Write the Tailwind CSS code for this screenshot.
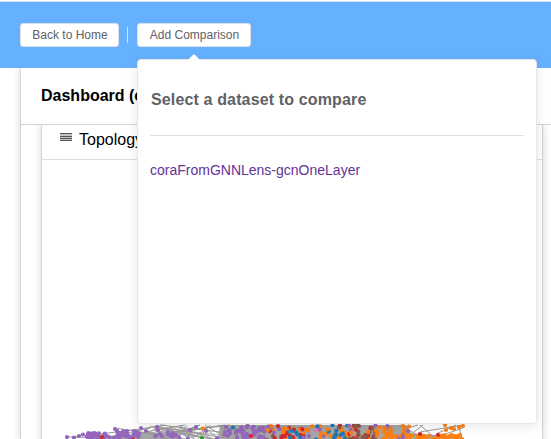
<!DOCTYPE html>
<html lang="en">
<head>
<meta charset="utf-8">
<title>Dashboard</title>
<script src="https://cdn.jsdelivr.net/npm/@tailwindcss/browser@4"></script>
</head>
<body class="relative h-[439px] w-[551px] overflow-hidden bg-white font-['Liberation_Sans',Arial,sans-serif] text-black">
<header class="mt-px flex h-[67px] items-start border-t border-[#dcdfe6] bg-[#66b1ff] pl-5 pt-[21px]">
  <button class="h-6 w-[99px] whitespace-nowrap rounded-[3px] border border-[#dcdfe6] bg-white pl-px text-[12px] leading-[22px] text-[#606266]">Back to Home</button>
  <div class="mx-[8px] mt-1 h-4 w-px bg-[#dcdfe6]"></div>
  <button class="ml-px h-6 w-[114px] whitespace-nowrap rounded-[3px] border border-[#dcdfe6] bg-white pl-px text-[12px] leading-[22px] text-[#606266]">Add Comparison</button>
</header>
<main class="ml-5 flex h-[371px] flex-col border-l border-[#d3d3d3] bg-white shadow-[0_0_8px_rgba(0,0,0,0.16)] [clip-path:inset(0_0_0_-20px)]">
  <h1 class="h-[57px] shrink-0 whitespace-nowrap border-b border-[#d3d3d3] pl-5 text-[16px] font-bold leading-[55px]">Dashboard (c</h1>
  <div class="flex-1 overflow-hidden pl-5">
    <section class="h-[400px] w-[502px] border-x border-[#d3d3d3] bg-white shadow-[0_0_8px_rgba(0,0,0,0.16)]">
      <div class="flex h-[35px] items-start border-b border-[#dcdcdc] pl-[18px]">
        <svg class="mt-2" width="12" height="9" viewBox="0 0 12 9" shape-rendering="crispEdges"><path fill="#c4c4c4" d="M0 0h12v8H0z"/><path fill="#555" d="M0 0h12v1H0zM0 3h12v1H0zM0 5h12v1H0zM0 7h12v1H0z"/></svg>
        <h2 class="ml-[7px] mt-[3px] text-[16px] leading-[24px]">Topology</h2>
      </div>
      <svg class="mt-[263px] block" width="500" height="18" viewBox="42 422 500 18">
        <g id="links" stroke="#999" fill="none"></g>
        <g id="nodes"></g>
      </svg>
    </section>
  </div>
</main>
<aside class="absolute left-[137px] top-[59px] h-[365px] w-[400px] rounded-[4px] border border-[#e4e7ed] bg-white px-3 text-[#606266] shadow-[0_2px_12px_rgba(0,0,0,0.1)]">
  <svg class="absolute left-[50px] top-[-6px]" width="12" height="7" viewBox="0 0 12 7"><path fill="#fff" d="M0 6 5 .8Q6 0 7 .8L12 6V7H0Z"/></svg>
  <h3 class="h-[76px] whitespace-nowrap border-b border-[#dcdfe6] pl-px text-[16px] font-bold leading-[79px] tracking-[0.14px]">Select a dataset to compare</h3>
  <a class="mt-6 block whitespace-nowrap text-[14px] leading-5 text-[#643296]">coraFromGNNLens-gcnOneLayer</a>
</aside>
<script>
const P = '#9467bd', O = '#ff7f0e', B = '#1f77b4', R = '#d62728', N = '#8c564b', G = '#2ca02c', K = '#e377c2';
let seed = 17;
const rnd = () => (seed = (seed * 16807) % 2147483647) / 2147483647;
const links = document.getElementById('links'), nodes = document.getElementById('nodes');
const add = (g, tag, a) => {
  const e = document.createElementNS('http://www.w3.org/2000/svg', tag);
  for (const k in a) e.setAttribute(k, a[k]);
  g.appendChild(e);
};
const line = (x1, y1, x2, y2, w = 1) => add(links, 'line', {x1, y1, x2, y2, 'stroke-width': w});
const dot = (x, y, c) => add(nodes, 'circle', {cx: x, cy: y, r: 2.1, fill: c});

add(links, 'path', {d: 'M110 440V435L130 433 148 430 170 434 185 438 190 440H218L220 424H406L412 433 460 435 464 440Z', fill: '#a5a5a5', stroke: 'none'});
[[67,436,110,437],[75,436,84,433],[84,435,140,428],[115,427,160,434],[110,436,150,427],[140,428,165,424],[145,431,185,424],[150,434,225,424],[160,438,200,424],[155,430,215,438],[165,427,225,437],[160,424,220,431],[180,424,188,440],[187,424,175,440],[196,424,185,440],[210,424,196,440],[205,424,223,435],[190,429,230,424],[400,424,425,438],[405,438,423,424],[420,424,435,437],[405,428,418,424],[420,431,463,424],[436,433,456,424],[440,435,463,427],[459,426,462,438],[408,433,460,436]].forEach(a => line(...a));
for (let i = 0; i < 22; i++) line(150 + rnd() * 75, 424 + rnd() * 5, 160 + rnd() * 65, 434 + rnd() * 6, .8);

const cluster = (n, x0, x1, y0, y1, colors) => {
  for (let i = 0; i < n; i++) dot(x0 + rnd() * (x1 - x0), y0 + rnd() * (y1 - y0), colors[Math.floor(rnd() * colors.length)]);
};
cluster(38, 87, 105, 432, 437.5, [P]);
cluster(12, 103, 122, 434, 438, [P]);
cluster(20, 117, 145, 430, 437, [P]);
cluster(9, 142, 174, 431, 436, [P]);
cluster(10, 223, 240, 426, 439, [P]);
cluster(34, 240, 265, 424, 439, [P]);
cluster(14, 263, 283, 424, 439, [P, P, N, R, O]);
cluster(26, 281, 305, 424, 439, [R, O, P, O, R, B]);
cluster(24, 302, 336, 424, 439, [O, P, B, O, P, O]);
cluster(30, 333, 355, 424, 439, [N, B, O, P, R, B]);
cluster(32, 352, 377, 424, 439, [N, N, O, R, N]);
cluster(36, 374, 406, 424, 439, [O, O, O, P, O]);
cluster(36, 408, 462, 434, 439, [O]);
cluster(5, 399, 412, 433, 439, [P, O]);
[[67,436,P],[74,436.5,P],[79,435,P],[83,433.5,P],[115,428,P],[120,432,P],[127,430,P],[134,430,P],[141,427,P],[146,430,P],[158,429,P],[157,426,P],[168,431,P],[176,434,P],[102,436,R],[133,438.5,R],
 [190,429,P],[196,426,P],[203,427.5,O],[206,430,P],[171,435,P],[179,436,P],[188,437.5,P],[202,437,G],[217,437,P],[225,431,P],[226,426,P],[233,426.5,B],[236,432,P],[268,429,O],[278,425,R],[287,428,O],[292,430,B],[283,435,R],[267,439,N],[251,435,R],[316,429,K],
 [403,425,O],[409,425.5,O],[408,430,P],[403,436,P],[445,424,O],[454,428,O],[459,426,O],[463,425,O],[446,429,O],[451,427,O],[420,433,R],[438,434,R],[436,437,O],[429,435,O],[452,434,O],[457,436,O],[462,438,O]].forEach(a => dot(...a));
</script>
</body>
</html>
